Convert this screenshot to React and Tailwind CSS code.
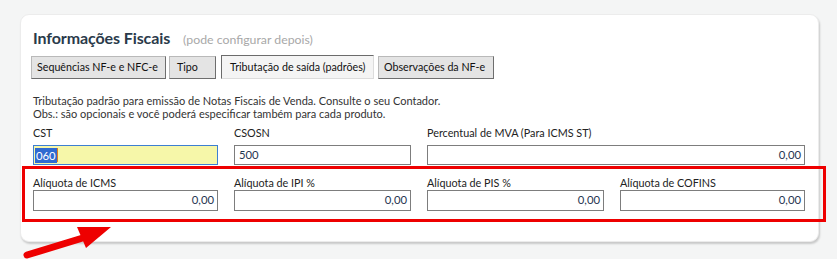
import React from 'react'

function TabButton({ children, active, className = '' }) {
    const base = active
        ? 'bg-[#f4f4f4] border-t-[#6b6b6b] border-l-[#6b6b6b] border-r-[#dcdcdc] border-b-[#dcdcdc]'
        : 'bg-[#e4e4e4] border-t-[#b9b9b9] border-l-[#b9b9b9] border-r-[#6e6e6e] border-b-[#6e6e6e]'
    return (
        <div className={`h-[23px] flex items-center px-[5px] border text-[10.7px] text-[#111] whitespace-nowrap ${base} ${className}`}>
            {children}
        </div>
    )
}

function Field({ label, value }) {
    return (
        <div className="flex flex-col">
            <div className="h-[14px] leading-[14px] text-[10.8px] text-[#222] whitespace-nowrap">{label}</div>
            <div className="h-[21px] border border-[#7d7d7d] bg-white flex items-center justify-end px-[3px] text-[11.3px] text-[#1f3550]">
                {value}
            </div>
        </div>
    )
}

export default function App() {
    return (
        <div className="relative w-[837px] h-[259px] bg-[#f4f5f5] overflow-hidden" style={{ fontFamily: 'Lato, "Open Sans", sans-serif' }}>
            <div className="absolute left-[20px] top-[14px] w-[799px] h-[228px] bg-white rounded-[9px] border border-[#ececec] shadow-[1px_2px_2px_rgba(0,0,0,0.18)] pt-[13px] pl-[12px] pr-[13px]">
                {/* titulo */}
                <div className="flex items-baseline h-[20px] leading-[20px]">
                    <span className="text-[16px] font-bold text-[#2a3a4a] tracking-[-0.1px]">Informações Fiscais</span>
                    <span className="ml-[13px] text-[12.3px] text-[#a8a8a8]">(pode configurar depois)</span>
                </div>

                {/* abas */}
                <div className="flex items-center mt-[8px] ml-[-2px]">
                    <TabButton className="w-[135px]">Sequências NF-e e NFC-e</TabButton>
                    <TabButton className="w-[47px] ml-[3px] pl-[7px]">Tipo</TabButton>
                    <TabButton active className="w-[153px] ml-[5px] h-[24px] mt-[-1px] pl-[8px]">Tributação de saída (padrões)</TabButton>
                    <TabButton className="w-[116px] ml-[4px]">Observações da NF-e</TabButton>
                </div>

                {/* descricao */}
                <div className="mt-[15px] text-[11px] leading-[13px] text-[#333]">
                    <div>Tributação padrão para emissão de Notas Fiscais de Venda. Consulte o seu Contador.</div>
                    <div>Obs.: são opcionais e você poderá especificar também para cada produto.</div>
                </div>

                {/* linha 1 */}
                <div className="grid grid-cols-[185px_177px_378px] gap-x-[16px] mt-[6px]">
                    <div className="flex flex-col">
                        <div className="h-[14px] leading-[14px] text-[10.8px] text-[#222]">CST</div>
                        <div className="mt-[5px] h-[20px] border border-[#3d7fd2] bg-[#f6f7a9] flex items-center px-[1px] text-[11.3px]">
                            <span className="bg-[#2f6ad0] text-white leading-[15px] px-[1px]">060</span>
                            <span className="w-[1px] h-[14px] bg-[#e07b1f]"></span>
                        </div>
                    </div>
                    <div className="flex flex-col">
                        <div className="h-[14px] leading-[14px] text-[10.8px] text-[#222]">CSOSN</div>
                        <div className="mt-[5px] h-[20px] border border-[#7d7d7d] bg-white flex items-center px-[4px] text-[11.3px] text-[#1f3550]">500</div>
                    </div>
                    <div className="flex flex-col">
                        <div className="h-[14px] leading-[14px] text-[10.8px] text-[#222]">Percentual de MVA (Para ICMS ST)</div>
                        <div className="mt-[5px] h-[20px] border border-[#7d7d7d] bg-white flex items-center justify-end px-[3px] text-[11.3px] text-[#1f3550]">0,00</div>
                    </div>
                </div>

                {/* linha 2 */}
                <div className="grid grid-cols-[185px_177px_177px_185px] gap-x-[16px] mt-[11px]">
                    <Field label="Alíquota de ICMS" value="0,00" />
                    <Field label="Alíquota de IPI %" value="0,00" />
                    <Field label="Alíquota de PIS %" value="0,00" />
                    <Field label="Alíquota de COFINS" value="0,00" />
                </div>
            </div>

            {/* destaque vermelho */}
            <div className="absolute left-[22px] top-[166px] w-[804px] h-[56px] border-[3px] border-[#ee0000]"></div>

            {/* seta */}
            <svg className="absolute left-0 top-0" width="837" height="259" viewBox="0 0 837 259">
                <line x1="27" y1="255" x2="86" y2="237" stroke="#ee0000" strokeWidth="7" strokeLinecap="round" />
                <polygon points="111,227 77,227 86,248" fill="#ee0000" />
            </svg>
        </div>
    )
}
